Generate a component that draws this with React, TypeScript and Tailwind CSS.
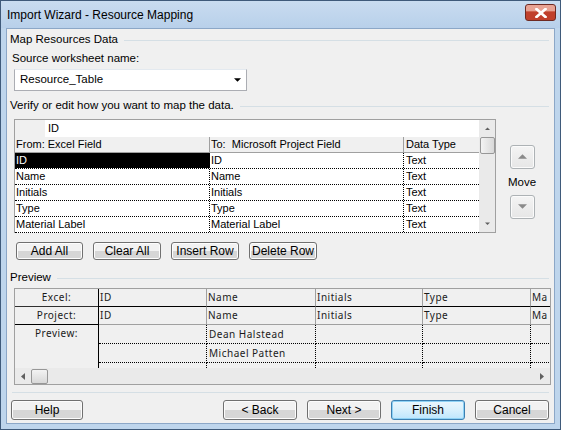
import React from "react";

const ui = { fontFamily: '"Liberation Sans", Arial, sans-serif' };
const wide = { fontFamily: '"Noto Sans", "DejaVu Sans", sans-serif' };

function Btn({ label, className = "", focus = false }: { label: string; className?: string; focus?: boolean }) {
  return (
    <div
      className={`flex items-center justify-center rounded-[3px] border text-[12px] text-black ${
        focus
          ? "border-[#3c7fb1] shadow-[inset_0_0_0_1px_#8fd2f5] bg-gradient-to-b from-[#eaf6fd] via-[#d9f0fc] to-[#bee6fd]"
          : "border-[#707070] bg-gradient-to-b from-[#f2f2f2] from-50% to-[#d6d6d6] to-50% shadow-[inset_0_0_0_1px_#fcfcfc]"
      } ${className}`}
    >
      {label}
    </div>
  );
}

function GroupLabel({ text, className = "" }: { text: string; className?: string }) {
  return (
    <div className={`flex items-center ${className}`}>
      <span className="pr-[6px] text-[11.5px] text-black">{text}</span>
      <div className="h-px flex-1 bg-[#d5dfe5]" />
    </div>
  );
}

function Tri({ down = false, color = "#4d4d4d", w = 7 }: { down?: boolean; color?: string; w?: number }) {
  return (
    <svg width={w} height={Math.ceil(w / 2) + 1} viewBox="0 0 8 5">
      {down ? <path d="M0 0h8L4 4z" fill={color} /> : <path d="M4 0l4 4H0z" fill={color} />}
    </svg>
  );
}

const mapRows = [
  { from: "ID", to: "ID" },
  { from: "Name", to: "Name" },
  { from: "Initials", to: "Initials" },
  { from: "Type", to: "Type" },
  { from: "Material Label", to: "Material Label" },
];

const cols = ["ID", "Name", "Initials", "Type", "Ma"];
const colW = ["w-[108px]", "w-[109px]", "w-[107px]", "w-[108px]", "w-[20px]"];

export default function App() {
  return (
    <div className="flex h-[430px] w-[561px] flex-col border border-[#3f5a7a] bg-[#bed5ec]" style={ui}>
      {/* Title bar */}
      <div className="flex h-[27px] shrink-0 items-center justify-between bg-gradient-to-b from-[#c9dcf0] to-[#b8d0ea] pl-[6px] pr-[4px]">
        <span className="text-[12px] text-black">Import Wizard - Resource Mapping</span>
        <div className="mb-[4px] flex h-[17px] w-[31px] items-center justify-center rounded-[3px] border border-[#6e2a22] bg-gradient-to-b from-[#e8a394] from-40% to-[#c0402c] to-45%">
          <svg width="12" height="10" viewBox="0 0 12 10">
            <path d="M1.5 1l9 8M10.5 1l-9 8" stroke="#fff" strokeWidth="2.6" strokeLinecap="square" />
            <path d="M1.5 1l9 8M10.5 1l-9 8" stroke="#fff" strokeWidth="1.6" />
          </svg>
        </div>
      </div>

      {/* Client area */}
      <div className="mx-[5px] mb-[5px] flex flex-1 flex-col border border-[#8ca7c7] bg-[#f0f0f0] pl-[3px] pr-[5px]">
        <GroupLabel text="Map Resources Data" className="mt-[4px] h-[14px]" />
        <div className="ml-[2px] mt-[4px] text-[11.5px] leading-[14px]">Source worksheet name:</div>
        <div className="ml-[4px] mt-[4px] flex h-[22px] w-[233px] items-center justify-between border border-[#abadb3] border-t-[#e3e9ef] bg-white pl-[5px] pr-[5px] text-[11.5px]">
          <span>Resource_Table</span>
          <Tri down color="#000" />
        </div>
        <GroupLabel text="Verify or edit how you want to map the data." className="mt-[8px] h-[14px]" />

        <div className="mt-[6px] flex items-start">
          {/* Mapping grid */}
          <div className="ml-[4px] flex h-[114px] w-[482px] border border-[#a0a0a0] bg-[#f0f0f0] text-[11px]">
            <div className="flex w-[464px] flex-col">
              <div className="flex h-[17px] shrink-0">
                <div className="w-[30px] bg-[#f0f0f0]" />
                <div className="flex flex-1 items-center bg-white pl-[3px]">ID</div>
              </div>
              <div className="flex h-[16px] shrink-0 border-b border-[#a0a0a0]">
                <div className="flex w-[195px] items-center border-r border-[#a0a0a0] pl-[1px]">From: Excel Field</div>
                <div className="flex w-[194px] items-center border-r border-[#a0a0a0] pl-[1px]">To:&nbsp; Microsoft Project Field</div>
                <div className="flex flex-1 items-center pl-[2px]">Data Type</div>
              </div>
              {mapRows.map((r, i) => (
                <div key={r.from} className="flex h-[16px] shrink-0 border-b border-dotted border-black bg-white">
                  <div
                    className={`flex w-[195px] items-center border-r border-dotted border-black pl-[1px] ${
                      i === 0 ? "bg-black text-white" : ""
                    }`}
                  >
                    {r.from}
                  </div>
                  <div className="flex w-[194px] items-center border-r border-dotted border-black pl-[1px]">{r.to}</div>
                  <div className="flex flex-1 items-center pl-[2px]">Text</div>
                </div>
              ))}
            </div>
            {/* vertical scrollbar */}
            <div className="flex w-[16px] flex-col items-center bg-[#eaeaea]">
              <div className="flex h-[17px] items-center justify-center">
                <Tri w={5} color="#606060" />
              </div>
              <div className="h-[17px] w-[15px] rounded-[2px] border border-[#979797] bg-gradient-to-r from-[#f3f3f3] to-[#d8d8d8]" />
              <div className="flex-1" />
              <div className="flex h-[16px] items-center justify-center">
                <Tri down w={5} color="#606060" />
              </div>
            </div>
          </div>

          {/* Move buttons */}
          <div className="ml-[11px] mt-[26px] flex w-[30px] flex-col items-center">
            <div className="flex h-[24px] w-[25px] items-center justify-center rounded-[3px] border border-[#adb2b5] bg-gradient-to-b from-[#f4f4f4] to-[#e6e6e6] shadow-[inset_0_0_0_1px_#fbfbfb]">
              <Tri color="#8a8a8a" w={9} />
            </div>
            <div className="my-[6px] text-[11.5px] leading-[14px]">Move</div>
            <div className="flex h-[24px] w-[25px] items-center justify-center rounded-[3px] border border-[#adb2b5] bg-gradient-to-b from-[#f4f4f4] to-[#e6e6e6] shadow-[inset_0_0_0_1px_#fbfbfb]">
              <Tri down color="#8a8a8a" w={9} />
            </div>
          </div>
        </div>

        {/* Grid buttons */}
        <div className="ml-[6px] mt-[9px] flex gap-[10px]">
          <Btn label="Add All" className="h-[18px] w-[67px] text-[11.5px]" />
          <Btn label="Clear All" className="h-[18px] w-[68px] text-[11.5px]" />
          <Btn label="Insert Row" className="h-[18px] w-[68px] text-[11.5px]" />
          <Btn label="Delete Row" className="h-[18px] w-[68px] text-[11.5px]" />
        </div>

        <GroupLabel text="Preview" className="mt-[11px] h-[14px]" />

        {/* Preview grid */}
        <div
          className="ml-[4px] mt-[3px] flex h-[97px] w-[537px] flex-col overflow-hidden border border-[#a0a0a0] bg-[#f0f0f0] text-[10px] tracking-[0.5px] text-[#1a1a1a]"
          style={wide}
        >
          <div className="flex h-[79px] shrink-0 overflow-hidden">
            <div className="flex w-[84px] shrink-0 flex-col border-r border-black">
              <div className="flex h-[18px] shrink-0 items-center justify-center border-b border-[#303030]">Excel:</div>
              <div className="flex h-[18px] shrink-0 items-center justify-center border-b border-black">Project:</div>
              <div className="flex h-[16px] shrink-0 items-center justify-center">Preview:</div>
            </div>
            {cols.map((c, i) => (
              <div key={c} className={`flex shrink-0 flex-col overflow-hidden ${colW[i]}`}>
                <div className="flex h-[18px] shrink-0 items-center whitespace-nowrap border-b border-r border-b-black border-r-[#a0a0a0] pl-[1px]">{c}</div>
                <div className="flex h-[18px] shrink-0 items-center whitespace-nowrap border-b border-r border-[#a0a0a0] pl-[1px]">{c}</div>
                {[i === 1 ? "Dean Halstead" : "", i === 1 ? "Michael Patten" : "", ""].map((v, j) => (
                  <div
                    key={j}
                    className="flex h-[19px] shrink-0 items-center whitespace-nowrap border-b border-r border-dotted border-black pl-[2px]"
                  >
                    {v}
                  </div>
                ))}
              </div>
            ))}
          </div>
          {/* horizontal scrollbar */}
          <div className="flex h-[16px] shrink-0 items-center bg-[#eaeaea]">
            <div className="flex w-[16px] items-center justify-center">
              <svg width="4" height="7" viewBox="0 0 4 7">
                <path d="M4 0v7L0 3.5z" fill="#606060" />
              </svg>
            </div>
            <div className="h-[15px] w-[17px] rounded-[2px] border border-[#979797] bg-gradient-to-b from-[#f3f3f3] to-[#d8d8d8]" />
            <div className="flex-1" />
            <div className="flex w-[16px] items-center justify-center">
              <svg width="4" height="7" viewBox="0 0 4 7">
                <path d="M0 0v7l4-3.5z" fill="#606060" />
              </svg>
            </div>
          </div>
        </div>

        <div className="ml-[2px] mt-[7px] h-px bg-[#d5dfe5]" />

        {/* Footer buttons */}
        <div className="mt-[7px] flex items-center">
          <Btn label="Help" className="ml-[1px] h-[20px] w-[72px]" />
          <div className="flex-1" />
          <div className="flex gap-[10px]">
            <Btn label="< Back" className="h-[20px] w-[74px]" />
            <Btn label="Next >" className="h-[20px] w-[74px]" />
            <Btn label="Finish" focus className="h-[20px] w-[74px]" />
            <Btn label="Cancel" className="h-[20px] w-[74px]" />
          </div>
        </div>
      </div>
    </div>
  );
}
